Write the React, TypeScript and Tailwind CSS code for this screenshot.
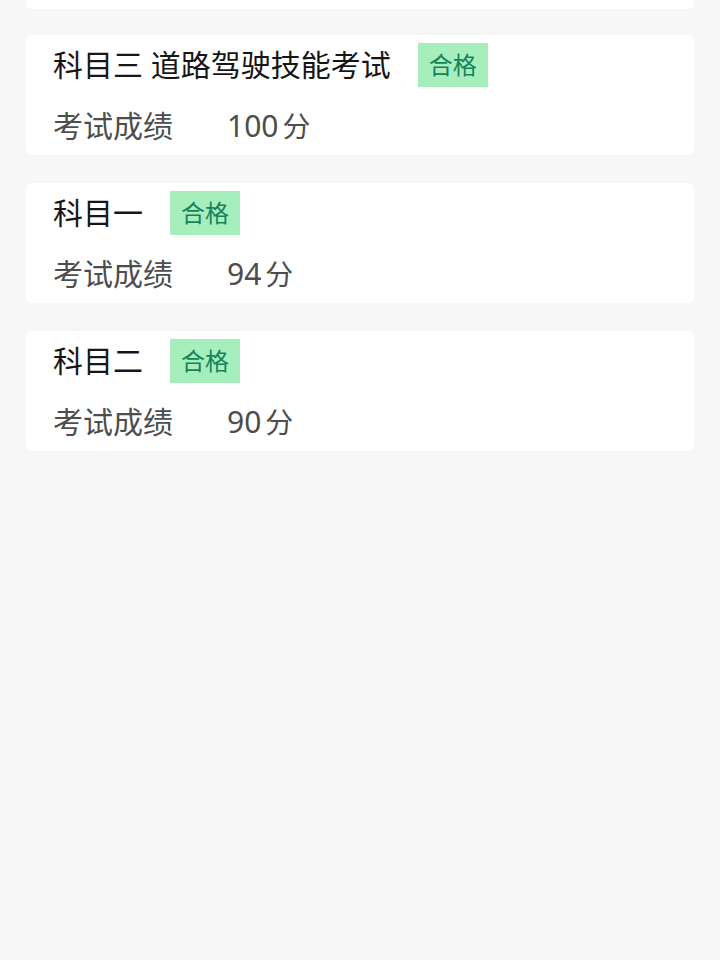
const results = [
  { title: '科目三 道路驾驶技能考试', status: '合格', score: 100 },
  { title: '科目一', status: '合格', score: 94 },
  { title: '科目二', status: '合格', score: 90 },
];

const ResultCard = ({ title, status, score }: { title: string; status: string; score: number }) => (
  <div className="bg-white rounded-md px-[27px] pt-[8px] pb-[8px]">
    <div className="flex items-center h-[44px]">
      <span className="text-[30px] leading-none text-[#161616]">{title}</span>
      <span className="ml-[27px] h-[44px] px-[11px] flex items-center bg-[#a6efbd] text-[#16825b] text-[24px] leading-none">
        {status}
      </span>
    </div>
    <div className="mt-[18px] flex items-center h-[42px] text-[30px] leading-none text-[#4d4d4d]">
      <span className="w-[174px]">考试成绩</span>
      <span>
        {score}
        <span className="ml-[4px] text-[28px]">分</span>
      </span>
    </div>
  </div>
);

export default function App() {
  return (
    <div
      className="min-h-screen bg-[#f7f7f7] px-[26px]"
      style={{ fontFamily: '"Noto Sans", "Noto Sans CJK SC", sans-serif' }}
    >
      <div className="flex flex-col gap-[28px]">
        {/* previous card, scrolled mostly out of view */}
        <div className="bg-white rounded-b-md h-[9px] -mb-[2px]" />
        {results.map((r) => (
          <ResultCard key={r.title} {...r} />
        ))}
      </div>
    </div>
  );
}
